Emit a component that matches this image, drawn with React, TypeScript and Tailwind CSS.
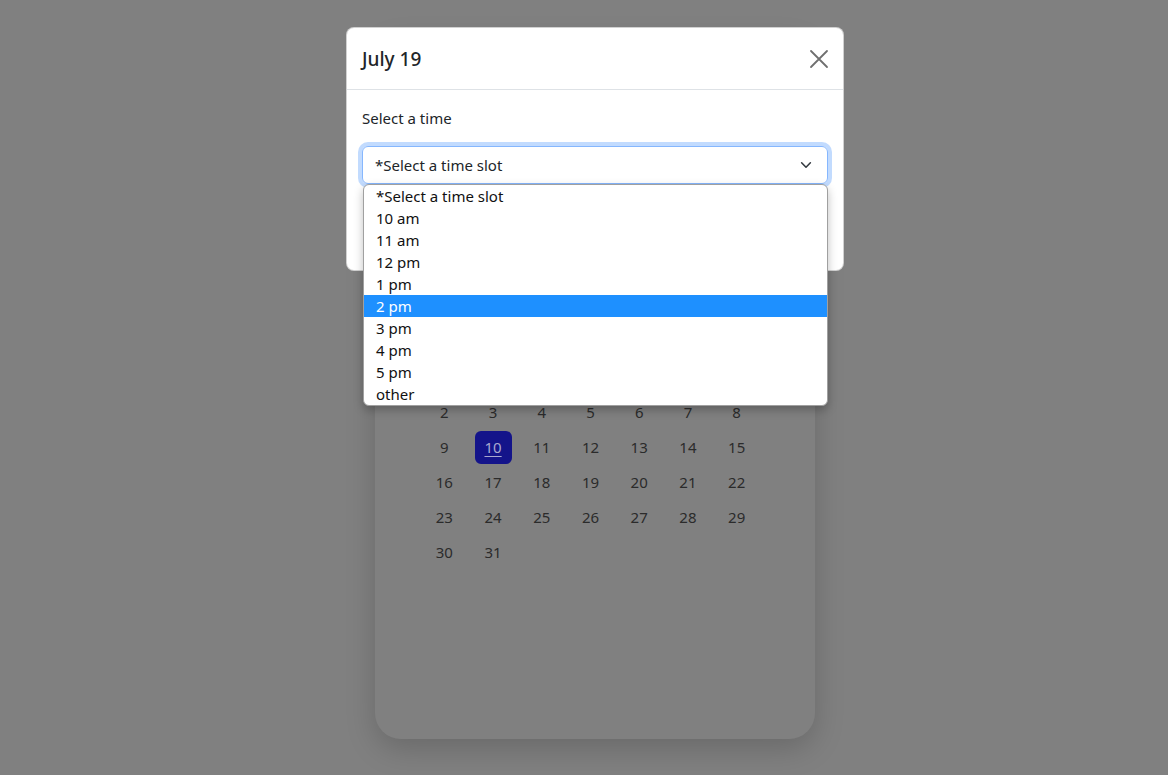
import React from "react";

const weeks: (number | null)[][] = [
  [null, null, null, null, null, null, 1],
  [2, 3, 4, 5, 6, 7, 8],
  [9, 10, 11, 12, 13, 14, 15],
  [16, 17, 18, 19, 20, 21, 22],
  [23, 24, 25, 26, 27, 28, 29],
  [30, 31, null, null, null, null, null],
];

const options = [
  "*Select a time slot",
  "10 am",
  "11 am",
  "12 pm",
  "1 pm",
  "2 pm",
  "3 pm",
  "4 pm",
  "5 pm",
  "other",
];

export default function App() {
  return (
    <div
      className="relative min-h-[775px] bg-[#808080] overflow-hidden"
      style={{ fontFamily: '"Noto Sans", "Open Sans", sans-serif' }}
    >
      {/* calendar card behind the backdrop */}
      <div className="flex justify-center pl-[22px] pt-[35px]">
        <div className="w-[440px] h-[704px] rounded-[26px] bg-[#808080] shadow-[0_10px_30px_rgba(0,0,0,0.18)] flex flex-col">
          <div className="h-[285px] flex flex-col items-center pt-[40px] text-[#2e2e2e]">
            <div className="text-[22px]">July 2023</div>
          </div>
          <div className="h-[40px] grid grid-cols-7 w-[341px] ml-[45px] text-[14px] text-[#2e2e2e]">
            {["Sun", "Mon", "Tue", "Wed", "Thu", "Fri", "Sat"].map((d) => (
              <div key={d} className="flex items-center justify-center">
                {d}
              </div>
            ))}
          </div>
          <div className="flex flex-col w-[341px] ml-[45px] text-[15px] text-[#2b2b2b]">
            {weeks.map((w, i) => (
              <div key={i} className="grid grid-cols-7 h-[35px]">
                {w.map((d, j) => (
                  <div key={j} className="flex items-center justify-center">
                    {d === 10 ? (
                      <div className="w-[37px] h-[33px] rounded-[6px] bg-[#14148a] flex items-center justify-center text-[#a9a9cf] underline underline-offset-[3px]">
                        10
                      </div>
                    ) : (
                      <span>{d ?? ""}</span>
                    )}
                  </div>
                ))}
              </div>
            ))}
          </div>
        </div>
      </div>

      {/* modal */}
      <div className="absolute inset-0 flex justify-center pl-[22px] pt-[27px]">
        <div className="relative w-[498px] h-[244px] bg-white rounded-[8px] border border-[rgba(0,0,0,0.18)] text-[#212529] flex flex-col">
          <div className="h-[62px] flex items-center justify-between pl-[15px] pr-[14px] border-b border-[#dee2e6]">
            <div className="text-[19px] font-medium leading-none pt-[2px]">July 19</div>
            <svg width="20" height="20" viewBox="0 0 20 20" className="mt-[1px]">
              <path d="M2 2 L18 18 M18 2 L2 18" stroke="#6f6f6f" strokeWidth="1.8" strokeLinecap="round" />
            </svg>
          </div>
          <div className="flex flex-col px-[15px] pt-[16px]">
            <div className="text-[15px] leading-[24px]">Select a time</div>
            <div className="mt-[16px] h-[38px] rounded-[6px] border border-[#86b7fe] shadow-[0_0_0_4px_rgba(13,110,253,0.25)] flex items-center justify-between pl-[12px] pr-[14px] text-[15px]">
              <span>*Select a time slot</span>
              <svg width="14" height="14" viewBox="0 0 16 16">
                <path d="M3 5.5 L8 10.5 L13 5.5" fill="none" stroke="#343a40" strokeWidth="1.8" strokeLinecap="round" strokeLinejoin="round" />
              </svg>
            </div>
          </div>

          {/* native dropdown popup */}
          <div className="absolute left-[16px] top-[156px] w-[465px] bg-white border border-[#a0a0a0] rounded-[6px] shadow-[0_4px_10px_rgba(0,0,0,0.25)] overflow-hidden z-10">
            {options.map((o) => (
              <div
                key={o}
                className={
                  "h-[22px] flex items-center pl-[12px] text-[15px] " +
                  (o === "2 pm" ? "bg-[#1e90ff] text-white" : "text-[#111]")
                }
              >
                {o}
              </div>
            ))}
          </div>
        </div>
      </div>
    </div>
  );
}
